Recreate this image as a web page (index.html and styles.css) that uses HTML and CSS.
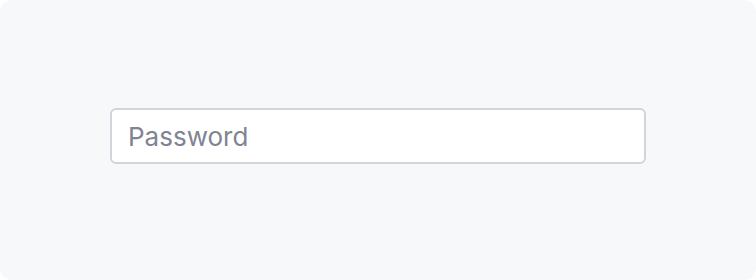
FILE: index.html
```html
<!DOCTYPE html>
<html>
<head>
<meta charset="utf-8">
<link rel="stylesheet" href="styles.css">
</head>
<body>
<div class="stage">
  <input class="field" type="password" placeholder="Password">
</div>
</body>
</html>
```
FILE: styles.css
```css
html, body { margin: 0; padding: 0; background: #ffffff; }
.stage {
  width: 756px;
  height: 280px;
  box-sizing: border-box;
  background: #f7f8fa;
  border-radius: 12px;
  display: flex;
  justify-content: center;
  align-items: flex-start;
  padding-top: 108px;
}
.field {
  width: 536px;
  height: 56px;
  box-sizing: border-box;
  border: 2px solid #d1d5db;
  border-radius: 6px;
  background: #ffffff;
  padding: 0 16px;
  font-family: Inter, "Noto Sans", sans-serif;
  font-size: 26px;
  color: #111827;
  outline: none;
}
.field::placeholder { color: #7f8493; opacity: 1; }
```
